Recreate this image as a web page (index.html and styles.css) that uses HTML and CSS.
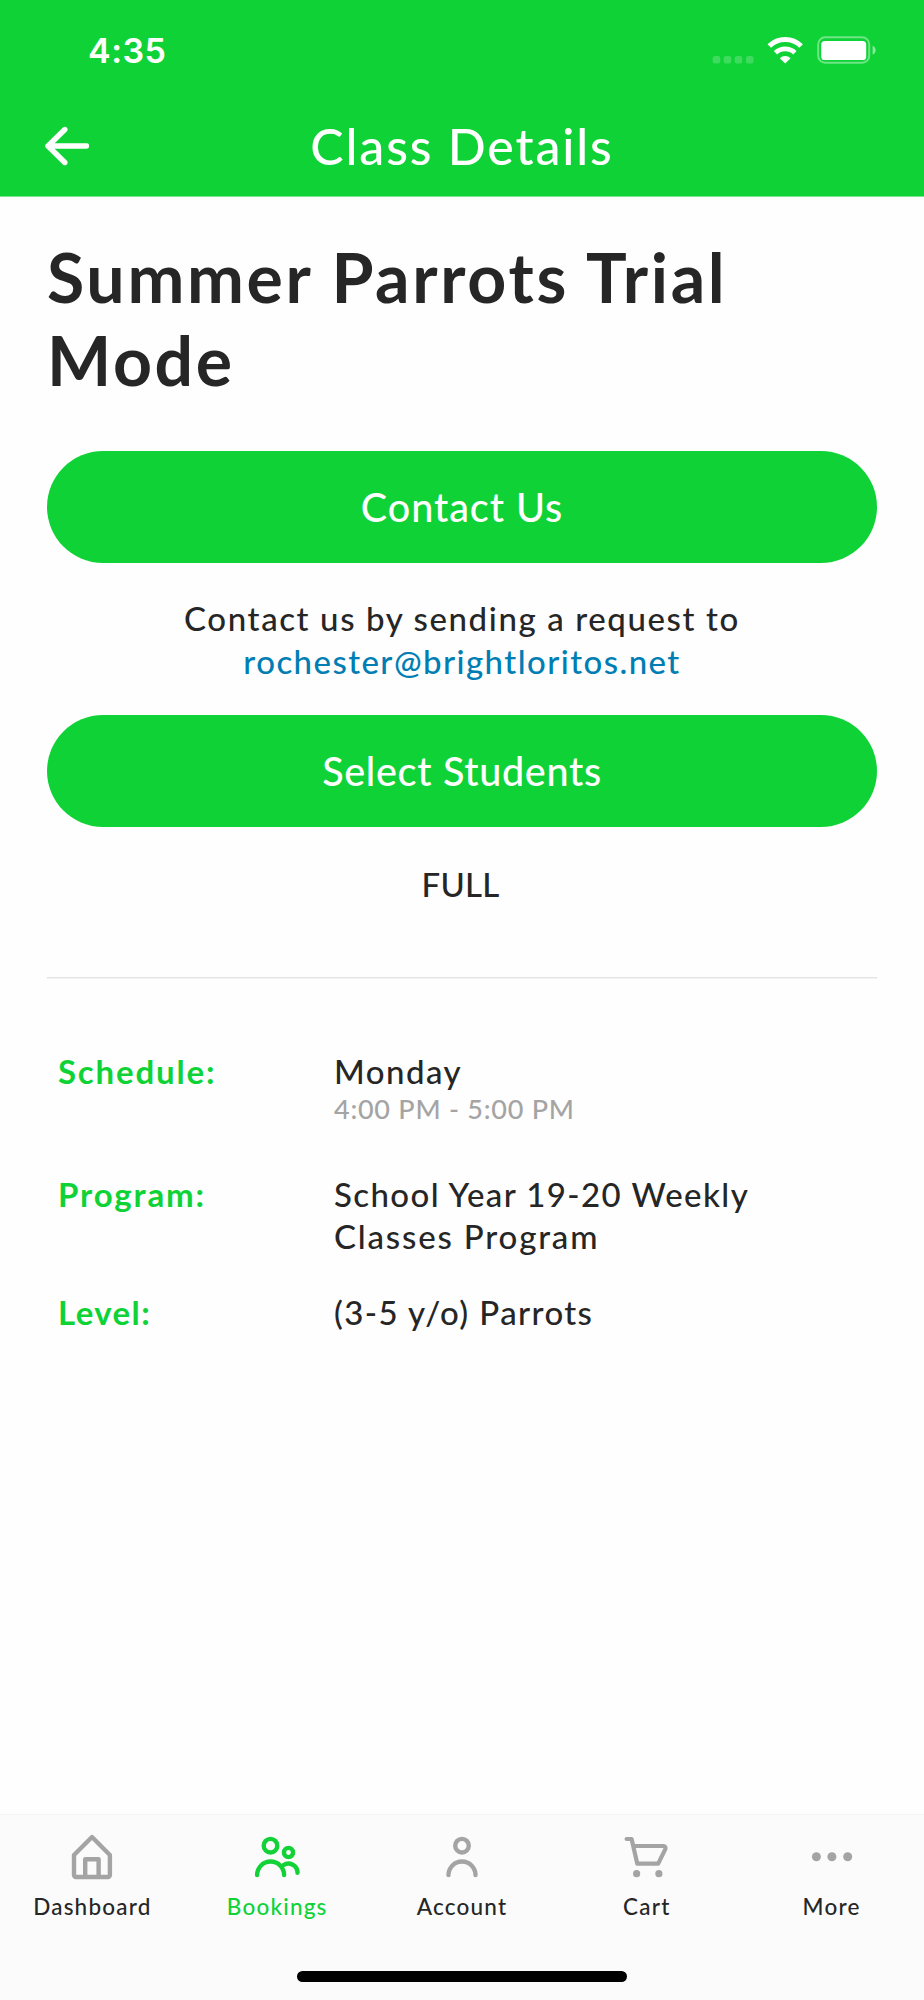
FILE: index.html
```html
<!DOCTYPE html>
<html lang="en">
<head>
<meta charset="utf-8">
<title>Class Details</title>
<link rel="stylesheet" href="styles.css">
</head>
<body>
<div class="screen">
  <header class="header">
    <div class="status">
      <span class="clock">4:35</span>
      <svg class="status-icons" width="164" height="28" viewBox="0 0 164 28" fill="#fff">
        <g opacity=".2"><rect x="0.700" y="20" width="7.500" height="7.500" rx="2.300"/><rect x="11.700" y="20" width="7.500" height="7.500" rx="2.300"/><rect x="22.800" y="20" width="7.500" height="7.500" rx="2.300"/><rect x="34" y="20" width="7.500" height="7.500" rx="2.300"/></g>
        <g fill="none" stroke="#fff"><path d="M57.300 10.100a22.300 22.300 0 0 1 31.800 0" stroke-width="5"/><path d="M63.500 16.700a14 14 0 0 1 19.400 0" stroke-width="4.800"/></g>
        <path d="M67.800 22.200a8 8 0 0 1 10.800 0L73.200 27.500z"/>
        <rect x="106.200" y="1.300" width="51" height="25.400" rx="7" fill="none" stroke="#fff" stroke-width="2" opacity=".4"/>
        <rect x="109.200" y="5" width="45" height="19" rx="3.600"/>
        <path d="M160.600 9.800c4 1.500 4 7.300 0 8.800z" opacity=".5"/>
      </svg>
    </div>
    <div class="navbar">
      <svg class="back" width="46" height="40" viewBox="0 0 46 40" fill="none" stroke="#fff" stroke-width="5.400" stroke-linecap="round" stroke-linejoin="round"><path d="M43.500 20H5M21.800 3.500L5 20l16.800 16.500"/></svg>
      <h1 class="title">Class Details</h1>
    </div>
  </header>
  <main class="content">
    <h2 class="heading">Summer Parrots Trial<br>Mode</h2>
    <a class="button contact">Contact Us</a>
    <p class="note">Contact us by sending a request to<br><a class="mail">rochester@brightloritos.net</a></p>
    <a class="button select">Select Students</a>
    <p class="full">FULL</p>
    <dl class="details">
      <dt>Schedule:</dt>
      <dd><div class="day">Monday</div><div class="time">4:00 PM - 5:00 PM</div></dd>
      <dt>Program:</dt>
      <dd class="program">School Year 19-20 Weekly<br><span class="wide">Classes Program</span></dd>
      <dt class="level">Level:</dt>
      <dd>(3-5 y/o) Parrots</dd>
    </dl>
  </main>
  <nav class="tabs">
    <a class="tab"><svg width="48" height="48" viewBox="0 0 48 48" fill="none" stroke="#a4a4a4" stroke-width="4.400" stroke-linejoin="round"><path d="M24 5L41.900 23V43a2 2 0 0 1-2 2H8a2 2 0 0 1-2-2V23z"/><path d="M17.200 45V27.200h13.400v17.800"/></svg><span class="label">Dashboard</span></a>
    <a class="tab active"><svg width="48" height="48" viewBox="0 0 48 48" fill="none" stroke="#12d237" stroke-width="4.400" stroke-linecap="round"><circle cx="17.500" cy="13.700" r="6.800"/><circle cx="35.500" cy="20.500" r="4.600"/><path d="M4.100 43a13.500 13.500 0 0 1 27 0"/><path d="M30.300 33.300a9 9 0 0 1 14.200 7.500"/></svg><span class="label">Bookings</span></a>
    <a class="tab"><svg width="48" height="48" viewBox="0 0 48 48" fill="none" stroke="#a4a4a4" stroke-width="4.400" stroke-linecap="round"><circle cx="24" cy="13.700" r="6.800"/><path d="M10.500 43a13.500 13.500 0 0 1 27 0"/></svg><span class="label">Account</span></a>
    <a class="tab"><svg width="48" height="48" viewBox="0 0 48 48" fill="none" stroke="#a4a4a4" stroke-width="4.200" stroke-linecap="round" stroke-linejoin="round"><path d="M3.600 7h5L14.300 31.700H35.200L42.200 17.400q1.200-3.200-2-3.400H11"/><g fill="#a4a4a4" stroke="none"><circle cx="13.600" cy="41.700" r="3.600"/><circle cx="35.900" cy="41.700" r="3.600"/></g></svg><span class="label">Cart</span></a>
    <a class="tab"><svg width="48" height="48" viewBox="0 0 48 48" fill="#a4a4a4"><circle cx="8.400" cy="24.800" r="4.500"/><circle cx="23.900" cy="24.800" r="4.500"/><circle cx="39.700" cy="24.800" r="4.500"/></svg><span class="label">More</span></a>
    <div class="home"></div>
  </nav>
</div>
</body>
</html>
```
FILE: styles.css
```css
* { box-sizing: border-box; margin: 0; padding: 0; }
body { width: 924px; background: #fff; color: #262626; font-family: Lato, "Open Sans", sans-serif; font-weight: 500; }
.screen { display: flex; flex-direction: column; height: 2000px; background: #fefefe; }
.header { height: 197px; background: #0fd336; border-bottom: 1px solid #7be692; color: #fff; flex: none; }
.status { display: flex; justify-content: space-between; align-items: center; height: 100px; padding: 0 48px 0 88px; }
.clock { padding-top: 2px; font: 600 34px/40px Inter, sans-serif; letter-spacing: .5px; }
.navbar { display: grid; grid-template-columns: 47px 1fr 47px; padding: 0 43px; height: 92px; align-items: center; }
.title { font-size: 50px; font-weight: 500; line-height: 60px; letter-spacing: 1.850px; text-align: center; }
.content { flex: 1; padding: 39px 47px 0; }
.heading { font-size: 68px; font-weight: 700; line-height: 82.700px; letter-spacing: 2.670px; }
.button { display: flex; align-items: center; justify-content: center; height: 112px; padding-bottom: 2px; border-radius: 56px; background: #0fd336; color: #fff; font-size: 39.500px; }
.contact { margin-top: 50px; letter-spacing: .950px; }
.note { margin-top: 34px; text-align: center; font-size: 33px; line-height: 42.300px; letter-spacing: 1.600px; }
.mail { color: #007eb4; letter-spacing: 1.430px; }
.select { margin-top: 33.400px; letter-spacing: .700px; }
.full { margin-top: 36px; padding-right: 3px; text-align: center; font-size: 33px; line-height: 42px; letter-spacing: .200px; }
.details { display: grid; grid-template-columns: 276px 1fr; grid-template-rows: 123px 118.500px auto; margin-top: 71.600px; padding: 72px 11px 0; border-top: 1px solid #e3e3e3; box-shadow: inset 0 1px #f3f3f3; font-size: 33px; line-height: 42.500px; letter-spacing: 1.400px; }
dt { color: #0fd336; font-weight: 700; letter-spacing: 1.820px; }
.level { letter-spacing: 1.400px; }
.day { letter-spacing: 1.500px; }
.wide { letter-spacing: 1.830px; }
.time { color: #a4a4a4; font-size: 27px; line-height: 34px; letter-spacing: .750px; }
.tabs { display: grid; grid-template-columns: repeat(5, 1fr); grid-template-rows: 120px 1fr; height: 186px; background: #fbfbfb; border-top: 1px solid #f4f4f4; flex: none; font-size: 22.500px; letter-spacing: 1.200px; }
.tab { display: flex; flex-direction: column; align-items: center; padding-top: 17px; }
.label { margin-top: 13px; }
.active { color: #0fd336; }
.home { grid-column: 1 / -1; justify-self: center; width: 330px; height: 11px; border-radius: 6px; background: #000; margin-top: 36px; }
```
